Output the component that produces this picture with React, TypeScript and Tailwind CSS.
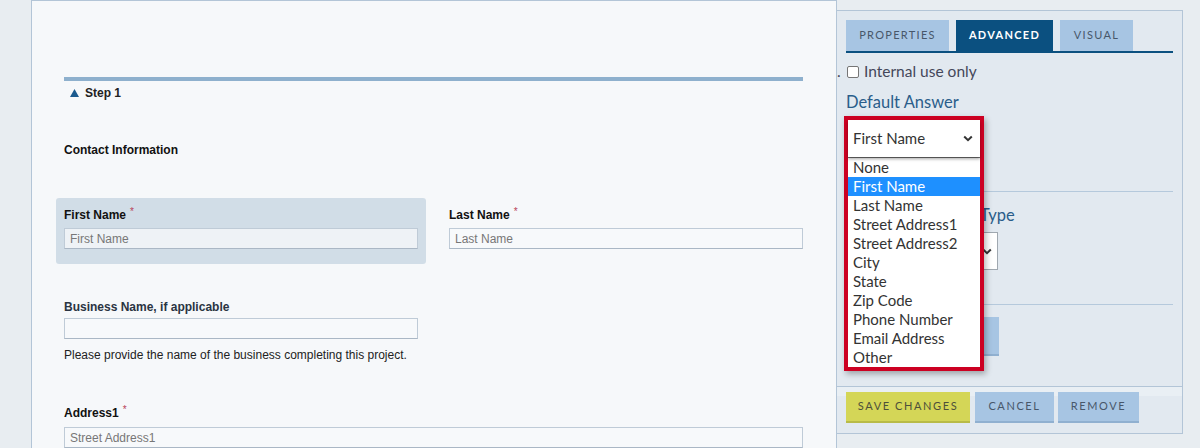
import React from "react";

const options = [
  "None",
  "First Name",
  "Last Name",
  "Street Address1",
  "Street Address2",
  "City",
  "State",
  "Zip Code",
  "Phone Number",
  "Email Address",
  "Other",
];

function Chevron() {
  return (
    <svg width="10" height="7" viewBox="0 0 10 7" className="shrink-0">
      <polyline points="1.2,1.5 5,5.2 8.8,1.5" fill="none" stroke="#333" strokeWidth="2" />
    </svg>
  );
}

function Required() {
  return <span className="relative -top-[4px] ml-[4px] text-[10px] font-normal text-[#b8435a]">*</span>;
}

function TextInput({ placeholder, className = "" }: { placeholder?: string; className?: string }) {
  return (
    <div
      className={`flex h-[21px] items-center border border-[#bfcbd7] border-b-[#aab7c5] pl-[5px] text-[12px] text-[#777] ${className}`}
    >
      {placeholder}
    </div>
  );
}

function FormPanel() {
  return (
    <main className="w-[806px] shrink-0 border-x border-t border-[#b3c5d7] bg-[#f6f8fa] pl-[32px] pr-[33px] pt-[76px] font-['Liberation_Sans',Arial,sans-serif] text-[12px] text-[#111]">
      <div className="h-[4px] bg-[#8eb0cd]" />
      <div className="mt-[2px] flex h-[18px] items-center gap-[6px] pl-[6px] pt-[1px] font-bold text-[#222]">
        <svg width="9" height="8" viewBox="0 0 9 8">
          <polygon points="4.5,0 9,8 0,8" fill="#1b5a8e" />
        </svg>
        Step 1
      </div>

      <div className="mt-[39px] h-[18px] leading-[20px] font-bold">Contact Information</div>

      <div className="mt-[40px] grid grid-cols-2 gap-x-[31px]">
        <div className="-mx-[8px] rounded-[3px] bg-[#d1dde7] px-[8px] pb-[15px] pt-[8px]">
          <div className="h-[16px] leading-[18px] font-bold">
            First Name
            <Required />
          </div>
          <TextInput placeholder="First Name" className="mt-[6px] bg-[#eef2f6]" />
        </div>
        <div className="pt-[8px]">
          <div className="h-[16px] leading-[18px] font-bold">
            Last Name
            <Required />
          </div>
          <TextInput placeholder="Last Name" className="mt-[6px] bg-[#f7f9fb]" />
        </div>
      </div>

      <div className="mt-[34px] h-[16px] leading-[18px] font-bold text-[#2a3442]">Business Name, if applicable</div>
      <TextInput className="mt-[4px] w-[354px] bg-[#f7f9fb]" />
      <div className="mt-[7px] h-[16px] leading-[18px] text-[#222]">
        Please provide the name of the business completing this project.
      </div>

      <div className="mt-[42px] h-[16px] leading-[18px] font-bold">
        Address1
        <Required />
      </div>
      <TextInput placeholder="Street Address1" className="mt-[7px] bg-[#f7f9fb]" />
    </main>
  );
}

function SettingsPanel() {
  return (
    <aside className="mt-[10px] flex h-[424px] w-[346px] shrink-0 flex-col border-r border-t border-b border-[#b3c5d7] bg-[#e2e9f0] font-['Lato','Noto_Sans',sans-serif]">
      <div className="flex-1 px-[9px] pt-[9px]">
        <div className="flex gap-[7px] border-b-2 border-[#0b5080] text-[11px] tracking-[1.3px]">
          <div className="flex h-[31px] w-[103px] items-center justify-center bg-[#a7c5e3] text-[#47576a]">PROPERTIES</div>
          <div className="flex h-[31px] w-[97px] items-center justify-center bg-[#0b5080] font-bold text-white">ADVANCED</div>
          <div className="flex h-[31px] w-[73px] items-center justify-center bg-[#a7c5e3] text-[#47576a]">VISUAL</div>
        </div>

        <div className="mt-[9px] flex h-[20px] items-center text-[15.5px] text-[#44475a]">
          <span className="-ml-[9px] w-[10px] text-[#44475a]">.</span>
          <span className="h-[12px] w-[12px] rounded-[2px] border border-[#767676] bg-white" />
          <span className="ml-[5px]">Internal use only</span>
        </div>

        <div className="mt-[10px] h-[20px] leading-[20px] text-[16.5px] text-[#2a5d8a]">Default Answer</div>

        <div className="relative mt-[4px] h-[41px] w-[132px]">
          <div className="absolute -left-[2px] top-0 z-10 w-[140px] border-4 border-[#cc0022] bg-white shadow-[2px_3px_6px_rgba(0,0,0,0.3)]">
            <div className="relative flex h-[37px] items-center justify-between pl-[5px] pr-[7px] text-[15px] text-[#333] shadow-[0_2px_3px_rgba(0,0,0,0.35)]">
              First Name
              <Chevron />
            </div>
            <ul className="border-t border-[#767676]">
              {options.map((o) => (
                <li
                  key={o}
                  className={
                    o === "First Name"
                      ? "h-[19px] bg-[#1e90ff] pl-[5px] text-[15px] leading-[19px] text-white"
                      : "h-[19px] pl-[5px] text-[15px] leading-[19px] text-[#333]"
                  }
                >
                  {o}
                </li>
              ))}
            </ul>
          </div>
        </div>

        <div className="mt-[34px] h-px bg-[#b5c9dc]" />
        <div className="mt-[13px] h-[20px] leading-[20px] text-[16.5px] text-[#2a5d8a]">Answer Formatter Type</div>
        <div className="mt-[7px] flex h-[38px] w-[152px] items-center justify-end border border-[#a0a8b0] bg-white pr-[5px]">
          <Chevron />
        </div>
        <div className="mt-[34px] h-px bg-[#b5c9dc]" />
        <div className="mt-[12px] h-[39px] w-[153px] border-b-2 border-[#90b0d0] bg-[#a7c5e3]" />
      </div>

      <div className="flex h-[47px] gap-[5px] border-t border-[#b3c5d7] bg-[linear-gradient(#e9eff4_9px,#e2e9f0_9px)] px-[9px] pt-[5px] text-[11px] tracking-[1.6px]">
        <div className="flex h-[31px] w-[124px] items-center justify-center border-b-2 border-[#b8bb48] bg-[#d4d657] text-[#4d503a]">
          SAVE CHANGES
        </div>
        <div className="flex h-[31px] w-[79px] items-center justify-center border-b-2 border-[#90b0d0] bg-[#a7c5e3] text-[#47576a]">
          CANCEL
        </div>
        <div className="-ml-[1px] flex h-[31px] w-[81px] items-center justify-center border-b-2 border-[#90b0d0] bg-[#a7c5e3] text-[#47576a]">
          REMOVE
        </div>
      </div>
    </aside>
  );
}

export default function App() {
  return (
    <div className="flex h-[448px] w-[1200px] overflow-hidden bg-[#e8edf1]">
      <div className="w-[31px] shrink-0" />
      <FormPanel />
      <SettingsPanel />
    </div>
  );
}
